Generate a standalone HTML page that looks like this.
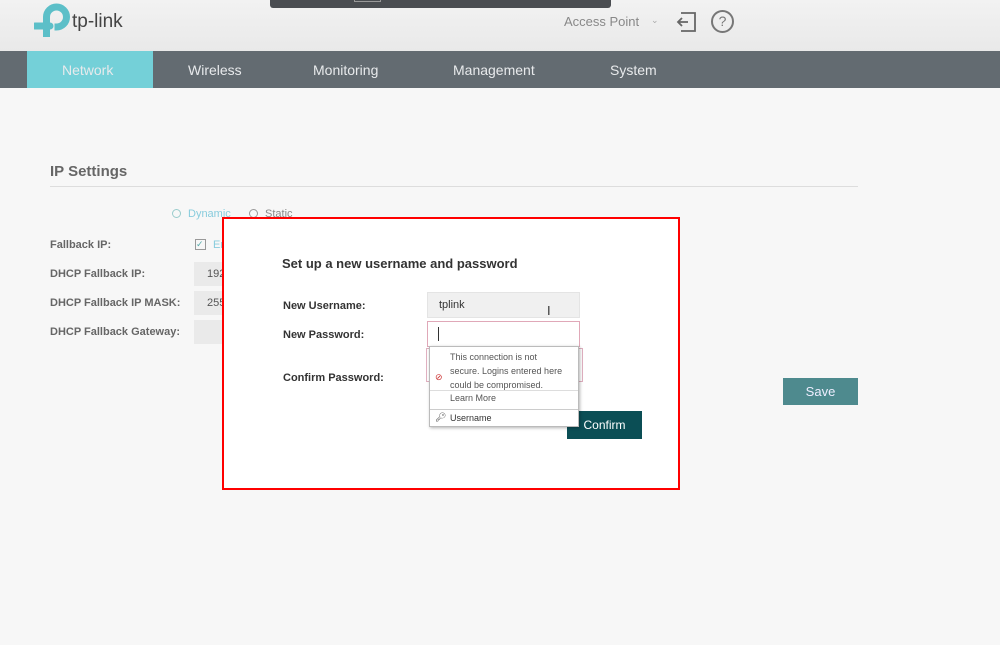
<!DOCTYPE html>
<html><head><meta charset="utf-8"><style>
*{box-sizing:border-box;margin:0;padding:0}
body{width:1000px;height:645px;background:#f7f7f7;font-family:"Liberation Sans",sans-serif;position:relative;overflow:hidden}
.abs{position:absolute}
.hdr{left:0;top:0;width:1000px;height:51px;background:linear-gradient(#f2f2f2,#e9e9e9)}
.nav{left:0;top:51px;width:1000px;height:37px;background:#636b71}
.nav span{position:absolute;top:11px;color:#e8eaec;font-size:14px}
.lbl{font-size:11px;font-weight:bold;color:#666;left:50px}
.inp{background:#eaeaea;height:24px}
</style></head><body>
<div class="abs hdr"></div>
<div class="abs" style="left:270px;top:0;width:341px;height:8px;background:#4a4d51;border-radius:0 0 3px 3px"></div>
<div class="abs" style="left:354px;top:0;width:27px;height:2px;border:1px solid #999;border-top:none"></div>
<svg class="abs" style="left:34px;top:3px" width="36" height="36" viewBox="0 0 36 36">
<path d="M1 23 H16" stroke="#5cbfc8" stroke-width="7" fill="none" stroke-linecap="round"/>
<path d="M12.5 34 V14 a10 10 0 1 1 10 10 h-2" stroke="#5cbfc8" stroke-width="7" fill="none"/>
</svg>
<div class="abs" style="left:72px;top:11px;font-size:19px;color:#444">tp-link</div>
<div class="abs" style="left:564px;top:14px;font-size:13px;color:#888">Access Point</div>
<div class="abs" style="left:651px;top:15px;font-size:9px;color:#aaa">⌄</div>
<svg class="abs" style="left:676px;top:10px" width="22" height="24" viewBox="0 0 22 24"><path d="M5 3 H19 V21 H5 M2 12 H12 M6 8 L2 12 L6 16" stroke="#666" stroke-width="1.8" fill="none"/></svg>
<div class="abs" style="left:711px;top:10px;width:23px;height:23px;border:2px solid #777;border-radius:50%;text-align:center;font-size:14px;line-height:19px;color:#777">?</div>
<div class="abs nav">
<div class="abs" style="left:27px;top:0;width:126px;height:37px;background:#74d0d8"></div>
<span style="left:62px">Network</span><span style="left:188px">Wireless</span><span style="left:313px">Monitoring</span><span style="left:453px">Management</span><span style="left:610px">System</span>
</div>
<div class="abs" style="left:50px;top:163px;font-size:15px;font-weight:bold;color:#666">IP Settings</div>
<div class="abs" style="left:50px;top:186px;width:808px;height:1px;background:#ddd"></div>
<div class="abs" style="left:172px;top:209px;width:9px;height:9px;border:1px solid #9cc;border-radius:50%"></div>
<div class="abs" style="left:188px;top:208px;font-size:11px;color:#8cd">Dynamic</div>
<div class="abs" style="left:249px;top:209px;width:9px;height:9px;border:1px solid #999;border-radius:50%"></div>
<div class="abs" style="left:265px;top:208px;font-size:11px;color:#888">Static</div>
<div class="abs lbl" style="top:239px">Fallback IP:</div>
<div class="abs" style="left:195px;top:239px;width:11px;height:11px;border:1px solid #999;font-size:9px;color:#5aa;line-height:9px">✓</div>
<div class="abs" style="left:213px;top:239px;font-size:11px;color:#8cd">En</div>
<div class="abs lbl" style="top:268px">DHCP Fallback IP:</div>
<div class="abs inp" style="left:194px;top:262px;width:40px"></div><div class="abs" style="left:207px;top:268px;font-size:11px;color:#555">192</div>
<div class="abs lbl" style="top:297px">DHCP Fallback IP MASK:</div>
<div class="abs inp" style="left:194px;top:291px;width:40px"></div><div class="abs" style="left:207px;top:297px;font-size:11px;color:#555">255</div>
<div class="abs lbl" style="top:326px">DHCP Fallback Gateway:</div>
<div class="abs inp" style="left:194px;top:320px;width:40px"></div>
<div class="abs" style="left:783px;top:378px;width:75px;height:27px;background:#4e8a8e;color:#eef;font-size:13px;text-align:center;line-height:27px">Save</div>
<div class="abs" style="left:222px;top:217px;width:458px;height:273px;border:2px solid #f00;background:#fff"></div>
<div class="abs" style="left:282px;top:256px;font-size:13px;font-weight:bold;color:#333">Set up a new username and password</div>
<div class="abs" style="left:283px;top:300px;font-size:11px;font-weight:bold;color:#333">New Username:</div>
<div class="abs" style="left:283px;top:329px;font-size:11px;font-weight:bold;color:#333">New Password:</div>
<div class="abs" style="left:283px;top:372px;font-size:11px;font-weight:bold;color:#333">Confirm Password:</div>
<div class="abs" style="left:427px;top:292px;width:153px;height:26px;background:#f0f0f0;border:1px solid #e4e4e4"></div>
<div class="abs" style="left:439px;top:299px;font-size:11px;color:#333">tplink</div>
<div class="abs" style="left:547px;top:303px;font-size:13px;color:#333">I</div>
<div class="abs" style="left:427px;top:321px;width:153px;height:26px;border:1px solid #e0a8b8;background:#fff"></div>
<div class="abs" style="left:438px;top:327px;width:1px;height:14px;background:#333"></div>
<div class="abs" style="left:426px;top:348px;width:157px;height:34px;border:1px solid #e0b0c0"></div>
<div class="abs" style="left:567px;top:411px;width:75px;height:28px;background:#0b4e55;color:#fff;font-size:12px;text-align:center;line-height:28px">Confirm</div>
<div class="abs" style="left:429px;top:346px;width:150px;height:81px;background:#fff;border:1px solid #bbb;box-shadow:1px 1px 3px rgba(0,0,0,.3)"></div>
<div class="abs" style="left:450px;top:350px;font-size:9px;line-height:14px;color:#555">This connection is not<br>secure. Logins entered here<br>could be compromised.</div>
<div class="abs" style="left:435px;top:372px;font-size:9px;color:#c33">⊘</div>
<div class="abs" style="left:430px;top:390px;width:148px;height:1px;background:#ddd"></div>
<div class="abs" style="left:450px;top:393px;font-size:9px;color:#555">Learn More</div>
<div class="abs" style="left:430px;top:409px;width:148px;height:1px;background:#ccc"></div>
<div class="abs" style="left:435px;top:412px;font-size:9px;color:#555">🔑︎</div>
<div class="abs" style="left:450px;top:413px;font-size:9px;color:#333">Username</div>
</body></html>
